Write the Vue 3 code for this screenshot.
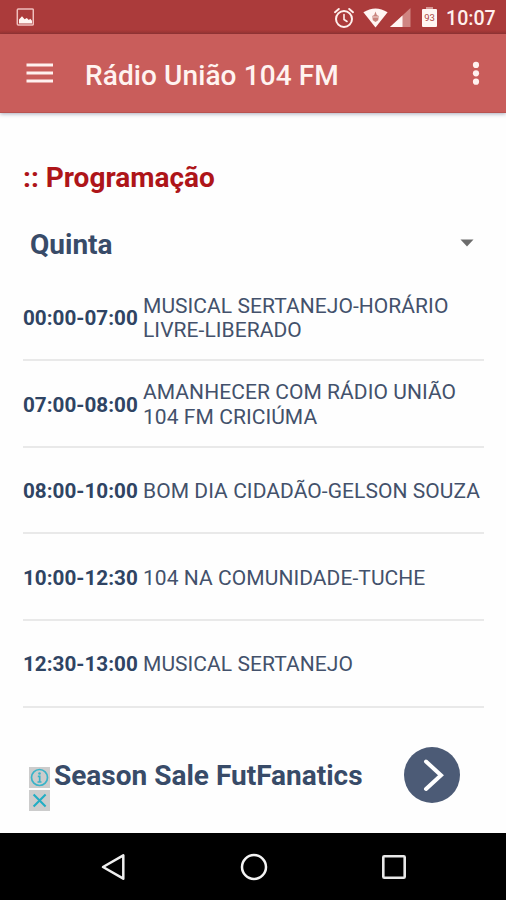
<!--
    programação da rádio
-->

<script setup>
    //------ imports ------
    import { ref } from 'vue';

    //------- data -------
    const day = ref('Quinta');
    const programs = ref([
        { time: '00:00-07:00', lines: ['MUSICAL SERTANEJO-HORÁRIO', 'LIVRE-LIBERADO'] },
        { time: '07:00-08:00', lines: ['AMANHECER COM RÁDIO UNIÃO', '104 FM CRICIÚMA'] },
        { time: '08:00-10:00', lines: ['BOM DIA CIDADÃO-GELSON SOUZA'] },
        { time: '10:00-12:30', lines: ['104 NA COMUNIDADE-TUCHE'] },
        { time: '12:30-13:00', lines: ['MUSICAL SERTANEJO'] },
    ]);
</script>


<template>
    <div class="screen">
        <div class="status-bar">
            <svg class="picture" width="18" height="18" viewBox="0 0 18 18">
                <rect x="1.3" y="1" width="16" height="16" rx="1" fill="none" stroke="#f0bfbd" stroke-width="1.5" />
                <path d="M3 15.5v-4l3-3.2 2.6 3 2.2-1.4 2 2 1.5-1.2 1.7 2v2.8z" fill="#fff5f2" />
            </svg>
            <div class="status-icons">
                <svg width="22" height="22" viewBox="0 0 22 22" fill="none" stroke="#fff0ed" stroke-linecap="round">
                    <circle cx="11" cy="12" r="8" stroke-width="2" />
                    <path d="M11 7.5v5l3 2" stroke-width="1.6" />
                    <path d="M2 5.2L5.8 2M20 5.2L16.2 2" stroke-width="2" />
                </svg>
                <svg class="wifi" width="25" height="20" viewBox="0 0 25 20">
                    <path d="M0.4 4.2Q12.5-3.4 24.6 4.2L12.5 19.6z" fill="#fff6f3" />
                    <path d="M12.5 3.6l1.3 3.4 2 1-.6 4.2-2.7 1.8-2.7-1.8-.6-4.2 2-1z" fill="#c9857d" />
                    <path d="M9.5 9h6" stroke="#f4dcd8" stroke-width="1" />
                </svg>
                <svg class="signal" width="21" height="19" viewBox="0 0 21 19">
                    <path d="M0 19L20.5 0v19z" fill="#cf8582" />
                    <path d="M0 19L12.5 7.4V19z" fill="#fff6f3" />
                </svg>
                <svg class="battery" width="15" height="20" viewBox="0 0 15 20">
                    <path d="M4 0h7v2h3q1 0 1 1v16q0 1-1 1H1q-1 0-1-1V3q0-1 1-1h3z" fill="#fff6f3" />
                    <path d="M4 0h7v2H4z" fill="#d89a97" />
                    <text x="7.5" y="13.5" text-anchor="middle" font-size="9.5" font-weight="400" fill="#ad4a45">93</text>
                </svg>
                <span class="clock">10:07</span>
            </div>
        </div>

        <div class="toolbar">
            <svg width="28" height="20" viewBox="0 0 28 20">
                <path d="M0.5 2h26.5M0.5 10h26.5M0.5 18h26.5" stroke="#fff1ef" stroke-width="2.8" />
            </svg>
            <h1>Rádio União 104 FM</h1>
            <svg class="more" width="8" height="24" viewBox="0 0 8 24" fill="#fff1ef">
                <circle cx="4" cy="3.9" r="3.1" />
                <circle cx="4" cy="12.3" r="3.1" />
                <circle cx="4" cy="20.7" r="3.1" />
            </svg>
        </div>

        <div class="content">
            <h2>:: Programação</h2>

            <div class="day-select">
                <span>{{ day }}</span>
                <svg width="14" height="8" viewBox="0 0 14 8">
                    <path d="M0.5 0.5h13L7 7.5z" fill="#6c6c6c" />
                </svg>
            </div>

            <div class="program" v-for="program in programs" :key="program.time">
                <span class="time">{{ program.time }}</span>
                <div class="name">
                    <div v-for="line in program.lines" :key="line">{{ line }}</div>
                </div>
            </div>
        </div>

        <div class="banner">
            <div class="ad-marks">
                <svg width="21" height="21" viewBox="0 0 21 21">
                    <circle cx="10.5" cy="10.5" r="8" fill="none" stroke="#39b3c8" stroke-width="1.7" />
                    <circle cx="10.5" cy="6.5" r="1.3" fill="#39b3c8" />
                    <path d="M8.8 9.3h1.9v5.4M8.5 15h4" fill="none" stroke="#39b3c8" stroke-width="1.7" />
                </svg>
                <svg width="21" height="21" viewBox="0 0 21 21">
                    <path d="M4.6 4.4l12 12M16.6 4.4l-12 12" stroke="#22adc4" stroke-width="2.1" />
                </svg>
            </div>
            <span class="ad-title">Season Sale FutFanatics</span>
            <svg class="go" width="56" height="56" viewBox="0 0 56 56">
                <circle cx="28" cy="28" r="28" fill="#4c5b76" />
                <path d="M22 14.5L37 28.3L22 42" fill="none" stroke="#fff" stroke-width="4" stroke-linecap="round" />
            </svg>
        </div>

        <div class="nav-bar">
            <svg width="26" height="28" viewBox="0 0 26 28">
                <path d="M3 14L23.3 2.3v23.4z" fill="none" stroke="#efefef" stroke-width="2.5" stroke-linejoin="round" />
            </svg>
            <svg width="28" height="28" viewBox="0 0 28 28">
                <circle cx="14" cy="14" r="12" fill="none" stroke="#f4f4f4" stroke-width="2.5" />
            </svg>
            <svg width="26" height="26" viewBox="0 0 26 26">
                <rect x="2.3" y="2.3" width="21.4" height="21.4" rx="1" fill="none" stroke="#e8e8e8" stroke-width="2.6" />
            </svg>
        </div>
    </div>
</template>

<style>
    body {
        margin: 0;
        background-color: #fefefe;
    }
</style>

<style scoped>
    .screen {
        display: flex;
        flex-direction: column;
        width: 506px;
        height: 900px;
        overflow: hidden;
        background-color: #fefefe;
        color: #2f4463;
        font-family: Roboto, "Liberation Sans", sans-serif;
    }
    svg {
        display: block;
        flex: none;
    }
    h1,
    h2 {
        margin: 0;
        white-space: nowrap;
    }
    .status-bar {
        display: flex;
        justify-content: space-between;
        height: 34px;
        flex: none;
        box-sizing: border-box;
        padding: 0 10px 0 16px;
        background: linear-gradient(#ab3b3b 30px, #98322f 34px);
    }
    .picture {
        margin-top: 8px;
    }
    .status-icons {
        display: flex;
        align-items: flex-start;
        padding-top: 7px;
    }
    .wifi {
        margin-left: 8px;
        margin-top: 1px;
    }
    .signal {
        margin-left: 2px;
        margin-top: 1px;
    }
    .battery {
        margin-left: 11px;
    }
    .clock {
        width: 50px;
        margin-left: 9px;
        font-size: 19.6px;
        font-weight: 500;
        line-height: 23px;
        color: #fff0ed;
    }
    .toolbar {
        display: flex;
        align-items: center;
        height: 79px;
        flex: none;
        box-sizing: border-box;
        padding: 0 26px;
        background-color: #c95d5b;
        border-bottom: 1px solid #b95350;
        box-shadow: 0 1px 4px rgba(40, 50, 90, 0.4);
    }
    .toolbar h1 {
        margin-left: 31px;
        margin-top: 5px;
        font-size: 28px;
        font-weight: 500;
        letter-spacing: 0.1px;
        color: #fff3f0;
    }
    .more {
        margin-left: auto;
    }
    .content {
        padding: 49px 22px 0 23px;
    }
    .content h2 {
        font-size: 28px;
        font-weight: 700;
        line-height: 32px;
        color: #ae1519;
    }
    .day-select {
        display: flex;
        align-items: center;
        justify-content: space-between;
        height: 32px;
        margin: 34px 0 14.6px;
        padding: 0 10px 0 7px;
        font-size: 28px;
        font-weight: 700;
        color: #384b68;
    }
    .day-select svg {
        margin-top: -2px;
    }
    .program {
        display: flex;
        align-items: center;
        height: 86.6px;
        box-sizing: border-box;
        padding-top: 3px;
        border-bottom: 2px solid #e9e9e9;
        font-size: 21px;
        line-height: 24.6px;
        white-space: nowrap;
    }
    .time {
        width: 120px;
        flex: none;
        font-size: 20.7px;
        font-weight: 700;
    }
    .name {
        color: #43516b;
        font-weight: 400;
        letter-spacing: 0.06px;
    }
    .banner {
        display: flex;
        align-items: flex-start;
        margin-top: auto;
        height: 86px;
        flex: none;
        padding: 0 46px 0 29px;
    }
    .ad-marks {
        display: flex;
        flex-direction: column;
        gap: 2px;
        margin-top: 20px;
    }
    .ad-marks svg {
        background-color: #cccccc;
    }
    .ad-title {
        margin: 13px 0 0 4px;
        font-size: 28px;
        font-weight: 700;
        line-height: 32px;
        color: #384b68;
        white-space: nowrap;
    }
    .go {
        margin-left: auto;
    }
    .nav-bar {
        display: flex;
        align-items: center;
        height: 67px;
        flex: none;
        box-sizing: border-box;
        padding: 0 99px 0 100px;
        justify-content: space-between;
        background-color: #000;
    }
</style>
